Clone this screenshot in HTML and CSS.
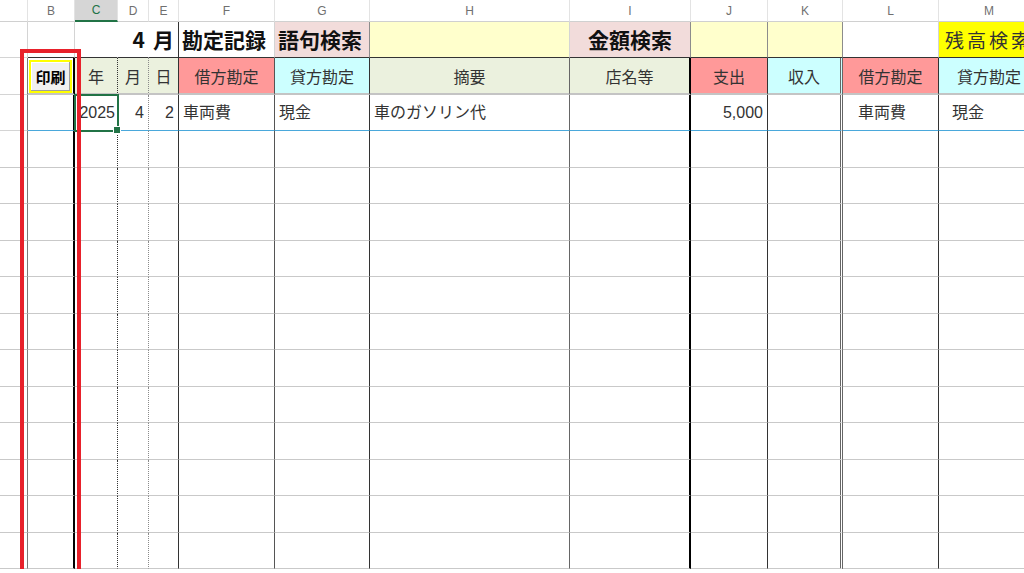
FILE: index.html
```html
<!DOCTYPE html>
<html lang="ja">
<head>
    <meta charset="UTF-8">
    <title>勘定記録</title>
    <link rel="stylesheet" href="styles.css">
</head>
<body>
    <div class="sheet" id="sheet">
        <div class="row colhead">
            <div></div>
            <div>B</div>
            <div class="active">C</div>
            <div>D</div>
            <div>E</div>
            <div>F</div>
            <div>G</div>
            <div>H</div>
            <div>I</div>
            <div>J</div>
            <div>K</div>
            <div>L</div>
            <div>M</div>
        </div>

        <div class="row title">
            <div></div>
            <div></div>
            <div></div>
            <div class="right">4</div>
            <div class="center">月</div>
            <div>勘定記録</div>
            <div class="pink">語句検索</div>
            <div class="cream"></div>
            <div class="pink center">金額検索</div>
            <div class="cream"></div>
            <div class="cream"></div>
            <div></div>
            <div class="yellow">残高検索</div>
        </div>

        <div class="row labels">
            <div></div>
            <div class="btn-cell"><div class="print-btn">印刷</div></div>
            <div class="sage">年</div>
            <div class="sage">月</div>
            <div class="sage">日</div>
            <div class="red">借方勘定</div>
            <div class="cyan">貸方勘定</div>
            <div class="sage">摘要</div>
            <div class="sage">店名等</div>
            <div class="red">支出</div>
            <div class="cyan">収入</div>
            <div class="red">借方勘定</div>
            <div class="cyan">貸方勘定</div>
        </div>

        <div class="row data first">
            <div></div>
            <div></div>
            <div class="right clip">2025</div>
            <div class="right">4</div>
            <div class="right">2</div>
            <div>車両費</div>
            <div>現金</div>
            <div>車のガソリン代</div>
            <div></div>
            <div class="right">5,000</div>
            <div></div>
            <div class="indent">車両費</div>
            <div class="indent">現金</div>
        </div>

        <div class="selected"><span class="handle"></span></div>
        <div class="highlight"></div>
    </div>

    <script>
        // empty rows below the first entry
        const sheet = document.getElementById('sheet');
        const marker = sheet.querySelector('.selected');
        for (let i = 0; i < 12; i++) {
            const row = document.createElement('div');
            row.className = 'row data';
            for (let c = 0; c < 13; c++) {
                row.appendChild(document.createElement('div'));
            }
            sheet.insertBefore(row, marker);
        }
    </script>
</body>
</html>
```

FILE: styles.css
```css
body {
    margin: 0;
    background-color: #ffffff;
    font-family: "Liberation Sans", "Noto Sans CJK JP", sans-serif;
    color: #333333;
    overflow: hidden;
}

.sheet {
    position: relative;
    width: 1040px;
}

.row {
    display: grid;
    grid-template-columns: 28px 47px 43px 31px 30px 96px 95px 200px 121px 77px 75px 96px 101px;
    height: 36px;
}

.row:nth-child(odd) {
    height: 37px;
}

.row > div {
    box-sizing: border-box;
    display: flex;
    align-items: center;
    padding: 0 4px;
    white-space: nowrap;
    overflow: hidden;
    border-right: 1px solid #d4d4d4;
    border-bottom: 1px solid #c9c9c9;
    font-size: 16px;
    line-height: 1;
}

/* column letters */
.row.colhead {
    height: 22px;
}

.row.colhead > div {
    justify-content: center;
    font-size: 12px;
    color: #707070;
    border-right: 1px solid #e3e3e3;
    border-bottom: 1px solid #d0d0d0;
}

.row.colhead > .active {
    background-color: #d6d6d6;
    color: #217346;
    border-bottom: 2px solid #217346;
}

/* vertical rules from the title row down */
.title > div:nth-child(5),
.labels > div:nth-child(5),
.data > div:nth-child(5) { border-right-color: #333333; }
.labels > div:nth-child(1),
.data > div:nth-child(1) { border-right-color: #7a7a7a; }
.labels > div:nth-child(2),
.data > div:nth-child(2) { border-right: 2px solid #000000; }
.labels > div:nth-child(3),
.data > div:nth-child(3) { border-right: 1px dotted #333333; }
.labels > div:nth-child(4),
.data > div:nth-child(4) { border-right: 1px dotted #8a8a8a; }
.labels > div:nth-child(6),
.data > div:nth-child(6) { border-right-color: #555555; }
.labels > div:nth-child(7),
.data > div:nth-child(7) { border-right-color: #333333; }
.labels > div:nth-child(8),
.data > div:nth-child(8) { border-right-color: #666666; }
.labels > div:nth-child(9),
.data > div:nth-child(9) { border-right: 2px solid #000000; }
.labels > div:nth-child(10),
.data > div:nth-child(10) { border-right-color: #333333; }
.labels > div:nth-child(11),
.data > div:nth-child(11) { border-right: 3px double #666666; }
.labels > div:nth-child(12),
.data > div:nth-child(12) { border-right-color: #333333; }

/* title row */
.title > div {
    font-family: "Noto Sans CJK JP", sans-serif;
    font-size: 21px;
    font-weight: bold;
    color: #111111;
    border-bottom-color: #333333;
    padding: 0 3px;
}

.title > div:nth-child(1) {
    border-bottom-color: #d4d4d4;
}

.title > div:nth-child(3),
.title > div:nth-child(4) {
    border-right-color: transparent;
}

.title > div:nth-child(7),
.title > div:nth-child(9),
.title > div:nth-child(10),
.title > div:nth-child(11) {
    border-right-color: #8c8c8c;
}

.title > .yellow {
    font-weight: normal;
    font-size: 19px;
    letter-spacing: 3px;
    color: #333333;
    padding-left: 6px;
}

/* header labels */
.labels > div {
    justify-content: center;
    font-family: "Noto Sans CJK JP", sans-serif;
    font-size: 16px;
    border-bottom: 2px solid #c4c4c4;
}

.labels > div:nth-child(1) {
    border-bottom: 1px solid #d4d4d4;
}

.btn-cell {
    padding: 1px 1px 0 1px !important;
}

.print-btn {
    width: 100%;
    height: 33px;
    box-sizing: border-box;
    display: flex;
    align-items: center;
    justify-content: center;
    background-color: #f0f0f0;
    border: 2px solid #ffff00;
    box-shadow: inset -1px -1px 0 #a0a0a0, inset 1px 1px 0 #ffffff;
    font-size: 15px;
    font-weight: bold;
    color: #000000;
}

/* data rows */
.data > div {
    font-family: "Liberation Sans", "Noto Sans CJK JP", sans-serif;
}

.first > div {
    border-bottom: 1px solid #4aa8db;
}

.first > div:nth-child(1) {
    border-bottom-color: #d4d4d4;
}

.right {
    justify-content: flex-end;
}

.center {
    justify-content: center;
}

.clip {
    padding-right: 2px !important;
}

.indent {
    padding-left: 15px !important;
}

.data > .indent:last-child {
    padding-left: 13px !important;
}

/* fills */
.pink { background-color: #f2dcdb; }
.cream { background-color: #ffffcc; }
.yellow { background-color: #ffff00; }
.sage { background-color: #ebf1de; }
.red { background-color: #ff9999; }
.cyan { background-color: #ccffff; }

/* active cell marker */
.selected {
    position: absolute;
    left: 74px;
    top: 94px;
    width: 45px;
    height: 38px;
    box-sizing: border-box;
    border: 2px solid #217346;
}

.handle {
    position: absolute;
    right: -4px;
    bottom: -4px;
    width: 6px;
    height: 6px;
    background-color: #217346;
    border: 1px solid #ffffff;
}

/* red callout box round column B */
.highlight {
    position: absolute;
    left: 20px;
    top: 49px;
    width: 61px;
    height: 600px;
    box-sizing: border-box;
    border: 4px solid #e8212b;
}
```
